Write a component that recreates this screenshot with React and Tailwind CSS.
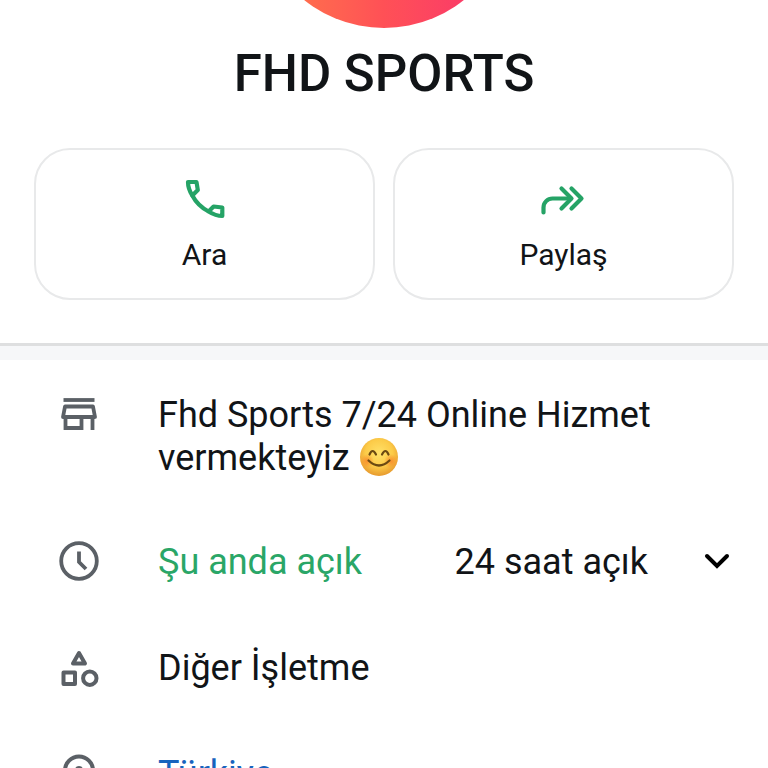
const PhoneIcon = () => (
  <svg className="size-12 text-[#25a366]" viewBox="0 0 48 48" fill="none" stroke="currentColor" strokeWidth="4.2" strokeLinejoin="round" aria-hidden="true">
    <path d="M7 7 h8.500 l1.300 8 -5.500 5.500 c-2.600 -4 -4.300 -8.500 -4.300 -13.500z" />
    <path d="M11.300 20.500 c3.600 6.800 9.200 12.300 16.300 16" />
    <path d="M27.600 36.500 l5 -5 8.700 1 v8.500 c-5 0 -9.600 -1.900 -13.700 -4.500z" />
  </svg>
);

const ForwardIcon = () => (
  <svg className="size-12 text-[#25a366]" viewBox="0 0 48 48" fill="none" stroke="currentColor" strokeWidth="4.200" strokeLinecap="round" strokeLinejoin="round" aria-hidden="true">
    <path d="M3.500 37.500 v-5 a9 9 0 0 1 9 -9 h18" />
    <path d="M21.500 13.500 l10 10 -10 10" />
    <path d="M31.500 13.500 l10 10 -10 10" />
  </svg>
);

const StoreIcon = () => (
  <svg className="size-10" viewBox="2 2 40 40" fill="none" stroke="currentColor" strokeWidth="3.800" aria-hidden="true">
    <path d="M6.500 8 h31" />
    <path d="M8 14.500 h28 l2 10.500 h-32z" strokeLinejoin="round" />
    <path d="M8.500 25 v11 h16 v-11" />
    <path d="M35.500 25 v13" />
  </svg>
);

const ClockIcon = () => (
  <svg className="size-10" viewBox="2 2 40 40" fill="none" stroke="currentColor" strokeWidth="3.800" aria-hidden="true">
    <circle cx="22" cy="22" r="17.800" />
    <path d="M22 12.500 v10.500 l7 7" />
  </svg>
);

const CategoryIcon = () => (
  <svg className="size-10" viewBox="2 2 40 40" fill="none" stroke="currentColor" strokeWidth="4" strokeLinejoin="round" aria-hidden="true">
    <path d="M22 8 l6 10.500 h-12z" />
    <rect x="6.500" y="27.500" width="11.500" height="11.500" />
    <circle cx="32.800" cy="33.200" r="6.700" />
  </svg>
);

const PinIcon = () => (
  <svg className="size-10" viewBox="2 2 40 40" fill="none" stroke="currentColor" strokeWidth="4" aria-hidden="true">
    <path d="M22 40 c-10 -9 -14 -14.500 -14 -20.500 a14 14 0 0 1 28 0 c0 6 -4 11.500 -14 20.500z" />
    <circle cx="22" cy="19" r="4" fill="currentColor" stroke="none" />
  </svg>
);

const ChevronIcon = () => (
  <svg className="size-8 shrink-0 text-black" viewBox="0 0 32 32" fill="none" stroke="currentColor" strokeWidth="4" strokeLinecap="round" aria-hidden="true">
    <path d="M7 9 l10 10 10 -10" />
  </svg>
);

const SmileEmoji = () => (
  <svg className="ml-px inline size-[38px] align-[-6px]" viewBox="1 1 38 38" role="img" aria-label="😊">
    <defs>
      <radialGradient id="face" cx="0.5" cy="0.4" r="0.6">
        <stop offset="0" stopColor="#ffe169" />
        <stop offset="0.6" stopColor="#fccb48" />
        <stop offset="1" stopColor="#e79a2e" />
      </radialGradient>
      <radialGradient id="cheek">
        <stop offset="0" stopColor="#f98a2b" stopOpacity="0.9" />
        <stop offset="1" stopColor="#f98a2b" stopOpacity="0" />
      </radialGradient>
    </defs>
    <circle cx="20" cy="20" r="19" fill="url(#face)" />
    <circle cx="8" cy="24" r="7" fill="url(#cheek)" />
    <circle cx="32" cy="24" r="7" fill="url(#cheek)" />
    <g fill="none" stroke="#6b4a12" strokeWidth="2.200" strokeLinecap="round">
      <path d="M10.500 17.500 q3 -7 6.500 0" />
      <path d="M23 17.500 q3.500 -7 6.500 0" />
      <path d="M9.500 23.500 q10.500 10 21 0" />
    </g>
  </svg>
);

const actions = [
  { label: "Ara", Icon: PhoneIcon },
  { label: "Paylaş", Icon: ForwardIcon },
];

const InfoRow = ({ icon, children }) => (
  <li className="flex items-start">
    <span className="mr-[59px] h-[43px] shrink-0 text-[#5b6066]">{icon}</span>
    <div className="min-w-0 flex-1">{children}</div>
  </li>
);

const App = () => {
  return (
    <main className="h-screen overflow-hidden bg-white font-['Roboto','Noto_Sans',sans-serif] text-[#111417]">
      <header className="flex flex-col items-center px-[34px] pb-[43px]">
        <div className="flex h-7 w-full items-end justify-center overflow-hidden">
          <div className="size-64 shrink-0 rounded-full bg-linear-to-r from-[#ff6f4c] from-15% via-[#ff5056] to-[#fa3a68] to-85%" />
        </div>
        <h1 className="mt-4 text-[51px] leading-[60px] font-medium">FHD SPORTS</h1>
        <div className="mt-11 grid w-full grid-cols-2 gap-[18px]">
          {actions.map(({ label, Icon }) => (
            <button
              key={label}
              type="button"
              className="flex flex-col items-center rounded-[36px] border-2 border-[#e8e9ea] pt-[25px] pb-[23px] text-[30px] leading-[40px]"
            >
              <Icon />
              <span className="mt-3">{label}</span>
            </button>
          ))}
        </div>
      </header>

      <div className="h-[17px] border-t-3 border-[#dedfe0] bg-[#f6f7f9]" />

      <div className="pt-[34px] pr-9 pl-[59px] text-[36px] leading-[43px]">
        <ul className="flex flex-col gap-[63px]">
          <InfoRow icon={<StoreIcon />}>
            <p className="-mb-0.5">
              Fhd Sports 7/24 Online Hizmet vermekteyiz <SmileEmoji />
            </p>
          </InfoRow>
          <InfoRow icon={<ClockIcon />}>
            <button type="button" className="flex w-full items-center text-left">
              <span className="flex-1 text-[#2aa667]">Şu anda açık</span>
              <span className="mr-[52px]">24 saat açık</span>
              <ChevronIcon />
            </button>
          </InfoRow>
          <InfoRow icon={<CategoryIcon />}>
            <p>Diğer İşletme</p>
          </InfoRow>
          <InfoRow icon={<PinIcon />}>
            <a href="#konum" className="text-[#1763bd]">
              Türkiye
            </a>
          </InfoRow>
        </ul>
      </div>
    </main>
  );
};

export default App;
